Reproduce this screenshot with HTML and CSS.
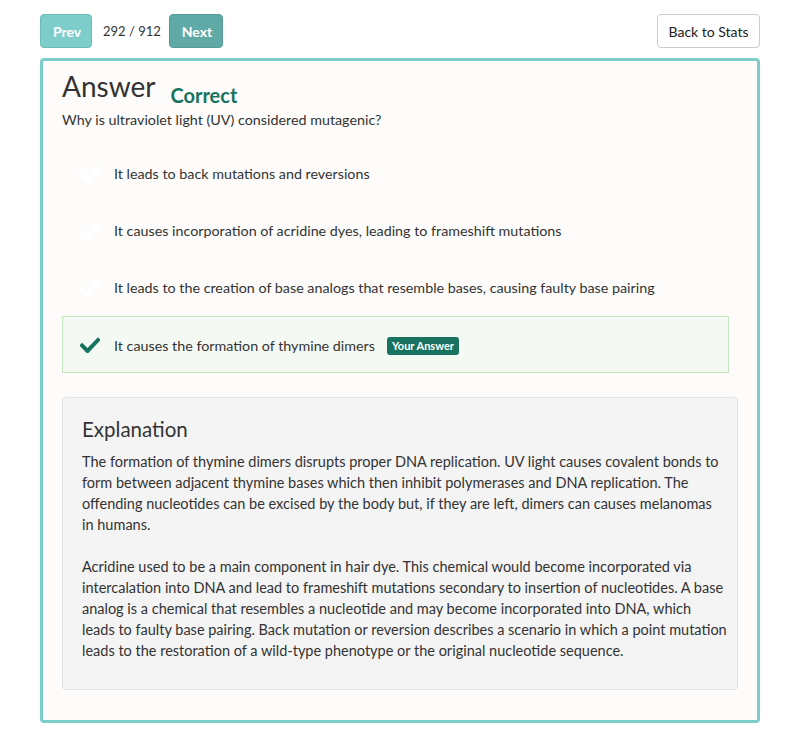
FILE: index.html
```html
<!DOCTYPE html>
<html>
<head>
<meta charset="utf-8">
<link rel="stylesheet" href="styles.css">
</head>
<body>
<div class="page">
  <div class="toolbar">
    <div class="nav">
      <button class="btn btn-prev">Prev</button>
      <span class="counter">292 / 912</span>
      <button class="btn btn-next">Next</button>
    </div>
    <button class="btn btn-back">Back to Stats</button>
  </div>
  <div class="panel">
    <div class="title-row">
      <h1 class="title">Answer</h1>
      <span class="status">Correct</span>
    </div>
    <p class="question">Why is ultraviolet light (UV) considered mutagenic?</p>
    <ul class="options">
      <li class="option"><svg class="check check-faint" viewBox="0 0 20 16"><path d="M2 8.5l5.5 5.5L18 3" /></svg><span>It leads to back mutations and reversions</span></li>
      <li class="option"><svg class="check check-faint" viewBox="0 0 20 16"><path d="M2 8.5l5.5 5.5L18 3" /></svg><span>It causes incorporation of acridine dyes, leading to frameshift mutations</span></li>
      <li class="option"><svg class="check check-faint" viewBox="0 0 20 16"><path d="M2 8.5l5.5 5.5L18 3" /></svg><span>It leads to the creation of base analogs that resemble bases, causing faulty base pairing</span></li>
      <li class="option option-correct"><svg class="check" viewBox="0 0 20 16"><path d="M2 8.5l5.5 5.5L18 3" /></svg><span>It causes the formation of thymine dimers</span><span class="badge">Your Answer</span></li>
    </ul>
    <div class="explanation">
      <h2 class="exp-title">Explanation</h2>
      <p>The formation of thymine dimers disrupts proper DNA replication. UV light causes covalent bonds to form between adjacent thymine bases which then inhibit polymerases and DNA replication. The offending nucleotides can be excised by the body but, if they are left, dimers can causes melanomas in&nbsp;humans.</p>
      <p>Acridine used to be a main component in hair dye. This chemical would become incorporated via intercalation into DNA and lead to frameshift mutations secondary to insertion of nucleotides. A base analog is a chemical that resembles a nucleotide and may become incorporated into DNA, which leads&nbsp;to faulty base pairing. Back mutation or reversion describes a scenario in which a point mutation leads to the restoration of a wild-type phenotype or the original nucleotide sequence.</p>
    </div>
  </div>
</div>
</body>
</html>
```
FILE: styles.css
```css
* { box-sizing: border-box; }
html, body { margin: 0; padding: 0; background: #fff; }
body {
  font-family: Lato, "Open Sans", sans-serif;
  color: #333;
  font-size: 14px;
}
.page { padding: 14px 40px 0 40px; }
.toolbar {
  display: flex;
  justify-content: space-between;
  align-items: center;
  height: 34px;
}
.nav { display: flex; align-items: center; }
.btn {
  font-family: inherit;
  height: 34px;
  border-radius: 4px;
  font-size: 14px;
  padding: 0 12px;
  cursor: pointer;
}
.btn-prev {
  background: #7dcdca;
  border: 1px solid #6cbcb8;
  color: #fff;
  font-weight: 700;
  width: 52px;
}
.btn-next {
  background: #5faaa6;
  border: 1px solid #559c98;
  color: #fff;
  font-weight: 700;
  width: 54px;
}
.counter { margin: 0 8px 0 11px; color: #333; font-size: 13px; }
.btn-back {
  background: #fff;
  border: 1px solid #ccc;
  color: #222;
  width: 103px;
  padding: 0;
}
.panel {
  margin-top: 10px;
  border: 3px solid #7dcdca;
  border-radius: 4px;
  background: #fdfcfb;
  padding: 8px 19px 30px 19px;
}
.title-row { display: flex; align-items: baseline; }
.title {
  margin: 0;
  font-size: 28px;
  font-weight: 400;
  line-height: 34px;
  color: #333;
}
.status {
  margin-left: 15px;
  font-size: 20px;
  font-weight: 700;
  color: #17735f;
  position: relative;
  top: 6px;
}
.question { margin: 7px 0 0 0; line-height: 20px; font-size: 14.3px; }
.options { list-style: none; margin: 15px 0 0 0; padding: 0; }
.option {
  display: flex;
  align-items: center;
  height: 57px;
  padding-left: 17px;
  margin-right: 9px;
  border: 1px solid transparent;
  font-size: 14.3px;
}
.check {
  width: 20px;
  height: 16px;
  fill: none;
  stroke: #17735f;
  stroke-width: 4;
  stroke-linecap: square;
  flex: none;
  margin-right: 14px;
}
.check-faint { stroke: #ffffff; }
.option-correct {
  background: #f4faf3;
  border-color: #c6e7c2;
}
.option-correct span:first-of-type { position: relative; top: 1px; }
.badge {
  margin-left: 12px;
  background: #17735f;
  color: #fff;
  font-size: 11px;
  font-weight: 700;
  padding: 2px 5px;
  border-radius: 3px;
  line-height: 14px;
  position: relative;
  top: 1px;
}
.explanation {
  margin-top: 24px;
  background: #f4f4f4;
  border: 1px solid #e3e3e3;
  border-radius: 4px;
  padding: 17px 7px 28px 19px;
  color: #333;
}
.exp-title {
  margin: 0 0 8px 0;
  font-size: 20.5px;
  font-weight: 400;
  line-height: 28px;
}
.explanation p {
  margin: 0 0 21px 0;
  font-size: 14.5px;
  line-height: 21px;
}
.explanation p:last-child { margin-bottom: 0; }
```
